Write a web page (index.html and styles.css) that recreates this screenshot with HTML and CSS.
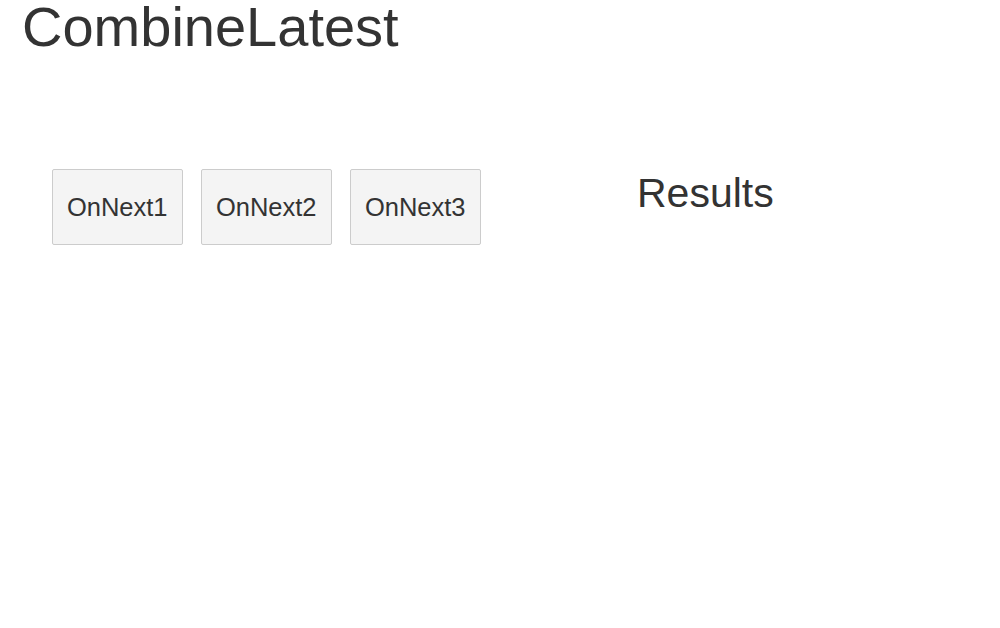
FILE: index.html
```html
<!DOCTYPE html>
<html>
<head>
<meta charset="utf-8">
<link rel="stylesheet" href="styles.css">
</head>
<body>
<h1 class="title">CombineLatest</h1>
<div class="content">
  <div class="buttons">
    <button class="btn">OnNext1</button>
    <button class="btn">OnNext2</button>
    <button class="btn">OnNext3</button>
  </div>
  <div class="results">
    <h2 class="results-title">Results</h2>
  </div>
</div>
</body>
</html>
```
FILE: styles.css
```css
html, body {
  margin: 0;
  padding: 0;
  background: #ffffff;
}
body {
  font-family: "Liberation Sans", Arial, sans-serif;
  color: #333333;
  width: 1000px;
  height: 628px;
  overflow: hidden;
}
.title {
  margin: 0 0 0 22px;
  font-size: 56px;
  font-weight: normal;
  line-height: 54px;
}
.content {
  display: flex;
  margin-top: 115px;
  padding-left: 52px;
}
.buttons {
  display: flex;
  gap: 18.5px;
  width: 585px;
}
.btn {
  width: 130.5px;
  height: 76px;
  box-sizing: border-box;
  border: 1px solid #cccccc;
  border-radius: 2px;
  background: #f4f4f4;
  font-family: "Liberation Sans", Arial, sans-serif;
  font-size: 25.5px;
  color: #333333;
  padding: 0;
}
.results-title {
  margin: 0;
  font-size: 41px;
  font-weight: normal;
  line-height: 48px;
}
```
